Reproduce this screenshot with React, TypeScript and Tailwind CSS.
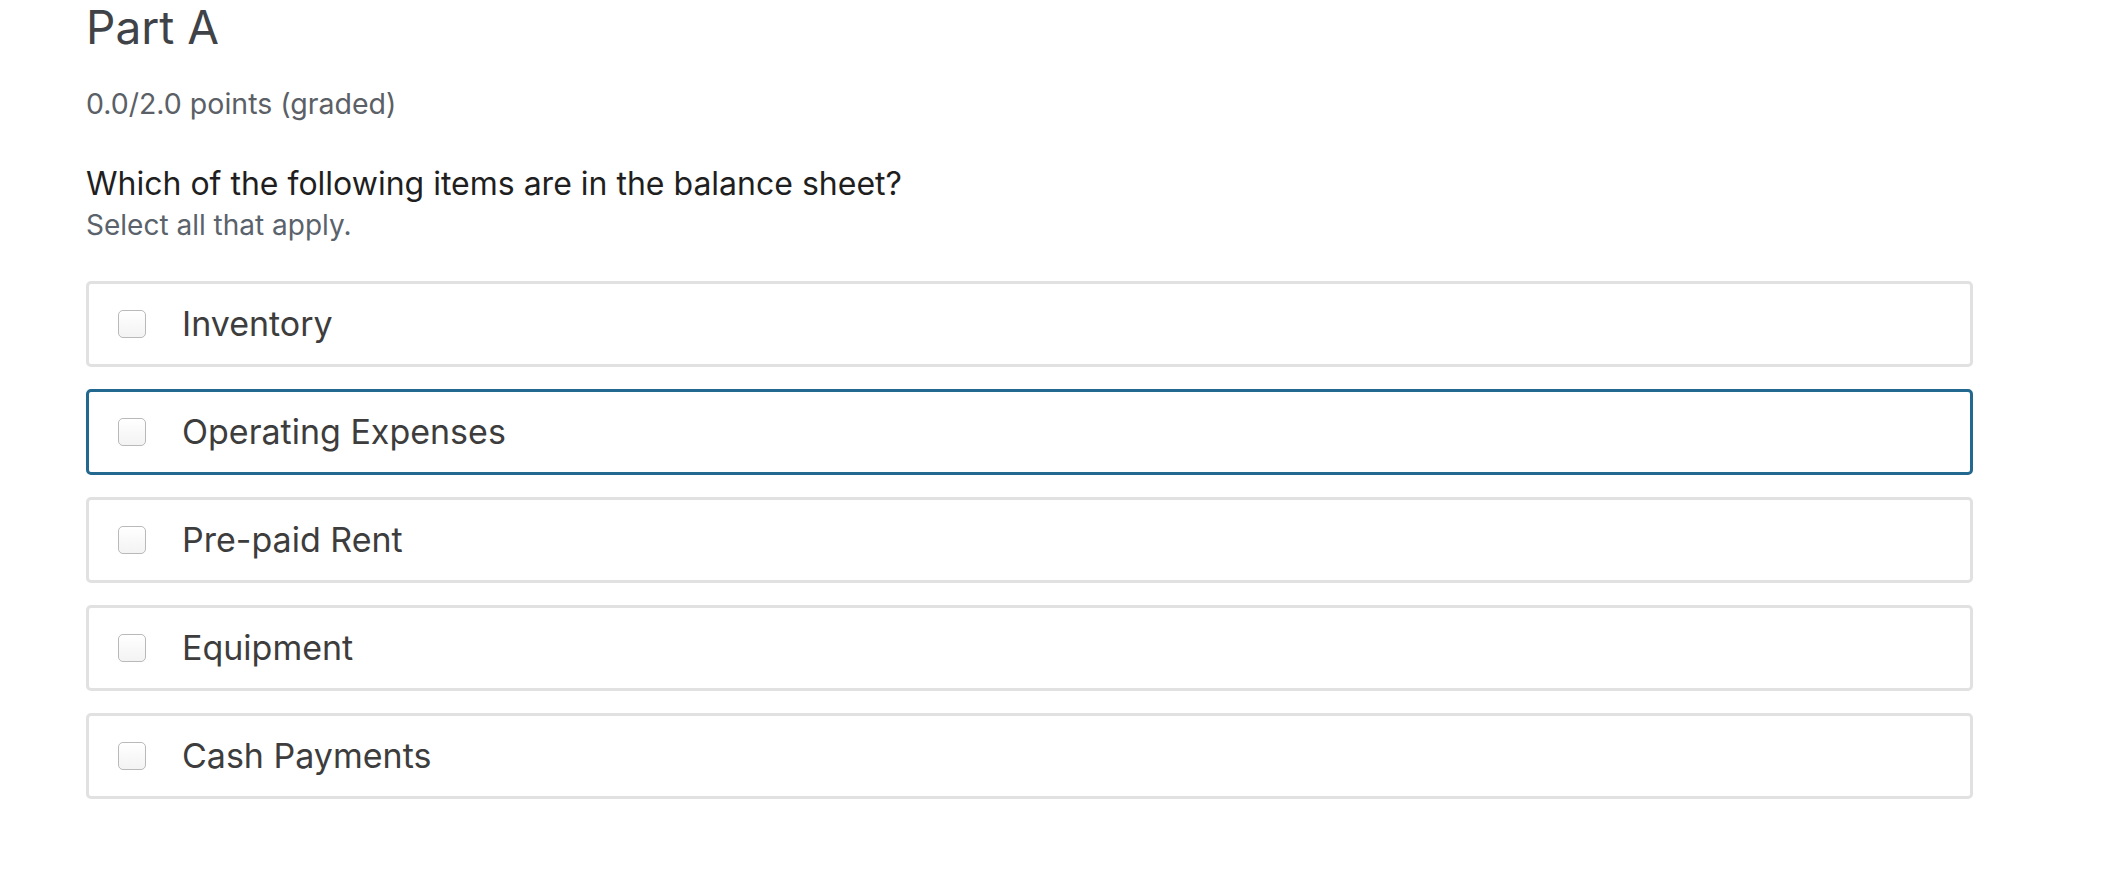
import React from 'react';

const OPTIONS = [
  { id: 'inventory', label: 'Inventory' },
  { id: 'opex', label: 'Operating Expenses', focused: true },
  { id: 'prepaid', label: 'Pre-paid Rent' },
  { id: 'equipment', label: 'Equipment' },
  { id: 'cash', label: 'Cash Payments' },
];

function Choice({ label, focused }: { label: string; focused?: boolean }) {
  const border = focused ? 'border-[#23688f]' : 'border-[#e1e1e1]';
  return (
    <label
      className={`flex h-[86px] cursor-pointer items-center rounded-[5px] border-[3px] bg-white pl-[29px] ${border}`}
    >
      <span className="h-[28px] w-[28px] shrink-0 rounded-[5px] border border-[#b9b9b9] bg-gradient-to-b from-white to-[#f3f3f3]" />
      <span className="ml-[36px] text-[34px] leading-[1.21] text-[#3d3d3d]">{label}</span>
    </label>
  );
}

export default function App() {
  return (
    <div className="min-h-screen bg-white font-['Inter',sans-serif]">
      <div className="w-[1887px] pl-[86px] box-content">
        <h2 className="text-[46px] leading-[1.21] font-normal text-[#3f4347]">Part A</h2>
        <p className="mt-[31px] text-[28.5px] leading-[1.21] text-[#5b6066]">0.0/2.0 points (graded)</p>
        <p className="mt-[44px] text-[32px] leading-[1.21] text-[#1f1f1f]">
          Which of the following items are in the balance sheet?
        </p>
        <p className="mt-[5px] text-[28px] leading-[1.21] text-[#5a626b]">Select all that apply.</p>
        <div className="mt-[38px] flex flex-col gap-[22px]">
          {OPTIONS.map((o) => (
            <Choice key={o.id} label={o.label} focused={o.focused} />
          ))}
        </div>
      </div>
    </div>
  );
}
